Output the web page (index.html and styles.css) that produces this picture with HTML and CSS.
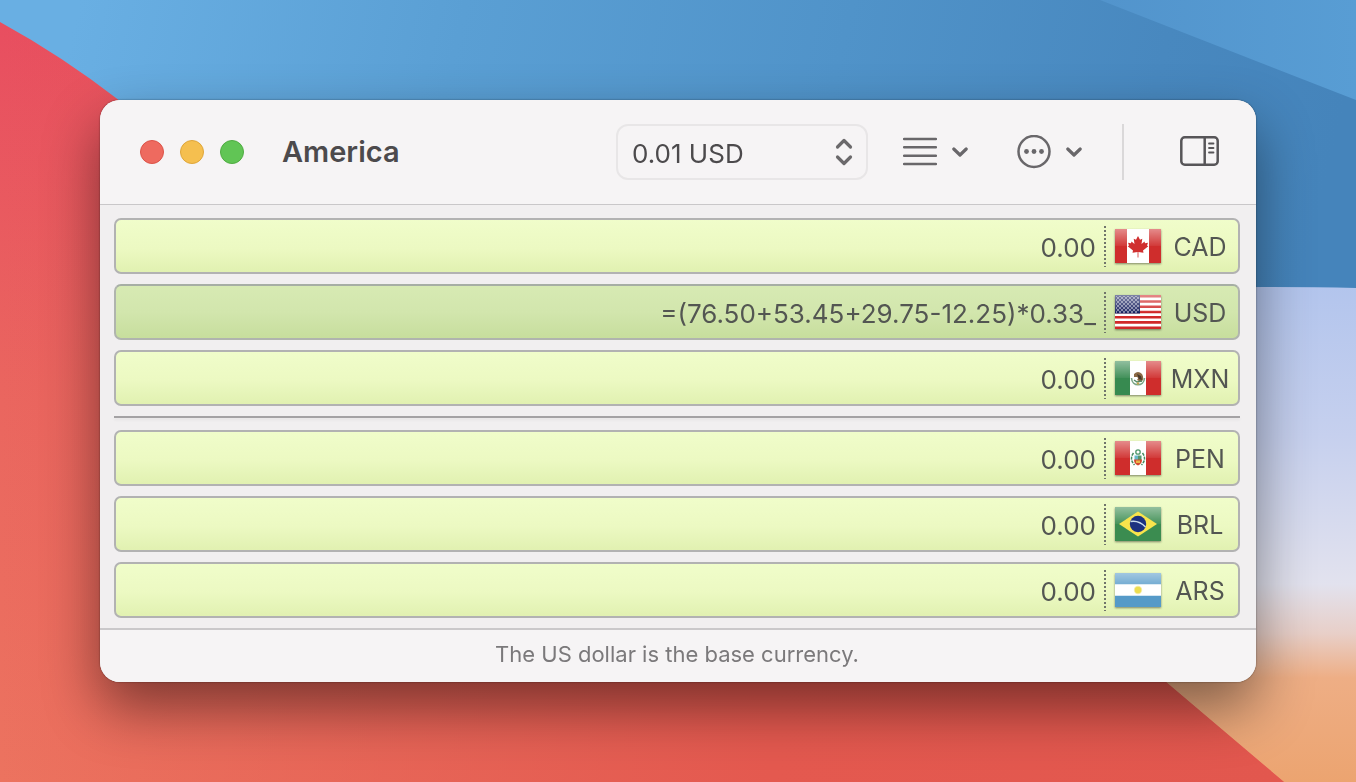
FILE: index.html
```html
<!DOCTYPE html>
<html lang="en">
<head>
<meta charset="utf-8">
<title>America</title>
<meta name="viewport" content="width=device-width, initial-scale=1">
<link rel="stylesheet" href="styles.css">
</head>
<body>
<svg class="wallpaper" viewBox="0 0 1356 782" preserveAspectRatio="none" aria-hidden="true">
  <defs>
    <linearGradient id="sky" gradientUnits="userSpaceOnUse" x1="80" y1="0" x2="1300" y2="290">
      <stop offset="0" stop-color="#69afe3"/><stop offset=".3" stop-color="#5a9fd4"/><stop offset=".6" stop-color="#5093c9"/><stop offset=".85" stop-color="#4888bf"/><stop offset="1" stop-color="#4584bb"/>
    </linearGradient>
    <linearGradient id="corner" x1="0" y1="0" x2="1" y2="0"><stop offset="0" stop-color="#5294cc"/><stop offset="1" stop-color="#589dd4"/></linearGradient>
    <linearGradient id="dune" x1="0" y1="0" x2="0" y2="1">
      <stop offset="0" stop-color="#b3c5ed"/><stop offset=".3" stop-color="#c6d0ee"/><stop offset=".6" stop-color="#e2e2ee"/><stop offset=".7" stop-color="#e8cfc8"/><stop offset=".79" stop-color="#eeae85"/><stop offset="1" stop-color="#eca470"/>
    </linearGradient>
    <linearGradient id="red" gradientUnits="userSpaceOnUse" x1="0" y1="22" x2="0" y2="782">
      <stop offset="0" stop-color="#e84e60"/><stop offset=".5" stop-color="#ea665f"/><stop offset="1" stop-color="#ec735f"/>
    </linearGradient>
    <linearGradient id="redRight" x1="0" y1="0" x2="1" y2="0">
      <stop offset="0" stop-color="#e0554e" stop-opacity="0"/><stop offset=".6" stop-color="#e4594f"/><stop offset="1" stop-color="#e2574e"/>
    </linearGradient>
  </defs>
  <rect width="1356" height="782" fill="url(#sky)"/>
  <path d="M1100 0L1356 100V0Z" fill="url(#corner)"/>
  <path d="M900 296Q1200 284 1356 288V782H900Z" fill="url(#dune)"/>
  <path d="M0 22Q62 56 120 101L720 390L1166 682L1284 782H0Z" fill="url(#red)"/>
  <path d="M0 22Q62 56 120 101L720 390L1166 682L1284 782H0Z" fill="url(#redRight)"/>
</svg>

<svg class="symbols" aria-hidden="true">
  <defs>
    <linearGradient id="gloss" x1="0" y1="0" x2="0" y2="1"><stop offset="0" stop-color="#fff" stop-opacity=".45"/><stop offset="1" stop-color="#fff" stop-opacity=".06"/></linearGradient>
    <pattern id="stars" width="4" height="4" patternUnits="userSpaceOnUse"><circle cx="1" cy="1" r=".8" fill="#fff"/><circle cx="3" cy="3" r=".8" fill="#fff"/></pattern>
    <symbol id="chevron" viewBox="0 0 16 10"><path d="M1.800 2L8 8L14.200 2" fill="none" stroke="currentColor" stroke-width="3.200" stroke-linecap="round" stroke-linejoin="round"/></symbol>
  </defs>
</svg>

<main class="window">
  <header class="toolbar">
    <div class="lights">
      <button class="light close" aria-label="Close"></button>
      <button class="light minimize" aria-label="Minimize"></button>
      <button class="light zoom" aria-label="Zoom"></button>
    </div>
    <h1 class="title">America</h1>
    <div class="picker">
      <select class="picker-select" aria-label="Precision"><option>0.01 USD</option></select>
      <svg class="picker-arrows" viewBox="0 0 18 28" aria-hidden="true"><path d="M2.500 9L9 2.500L15.500 9M2.500 19L9 25.500L15.500 19" fill="none" stroke="currentColor" stroke-width="3.200" stroke-linecap="round" stroke-linejoin="round"/></svg>
    </div>
    <button class="tool list-tool" aria-label="List options">
      <svg width="34" height="34" viewBox="0 0 34 34"><path d="M1 4H33M1 12.300H33M1 20.700H33M1 29H33" stroke="currentColor" stroke-width="2.400" stroke-linecap="round"/></svg>
      <svg width="16" height="10"><use href="#chevron"/></svg>
    </button>
    <button class="tool more-tool" aria-label="More options">
      <svg width="34" height="34" viewBox="0 0 34 34"><circle cx="17" cy="16.500" r="15.500" fill="none" stroke="currentColor" stroke-width="2.500"/><circle cx="9.500" cy="16.500" r="2.400" fill="currentColor"/><circle cx="17" cy="16.500" r="2.400" fill="currentColor"/><circle cx="24.500" cy="16.500" r="2.400" fill="currentColor"/></svg>
      <svg width="16" height="10"><use href="#chevron"/></svg>
    </button>
    <span class="divider"></span>
    <button class="tool side-tool" aria-label="Toggle sidebar">
      <svg width="39" height="32" viewBox="0 0 39 32"><rect x="1.300" y="1.300" width="36.400" height="27.400" rx="3.500" fill="none" stroke="currentColor" stroke-width="2.500"/><path d="M24.700 1.500V28.500" stroke="currentColor" stroke-width="2.500"/><path d="M29 7.500H33.500M29 12H33.500M29 16.500H33.500" stroke="currentColor" stroke-width="1.800" stroke-linecap="round"/></svg>
    </button>
  </header>

  <section class="rates">
    <div class="row">
      <input class="amount" id="cad" value="0.00">
      <span class="dots"></span>
      <svg class="flag" viewBox="0 0 46 34" aria-hidden="true"><path fill="#fff" d="M0 0H46V34H0Z"/><path fill="#cf2d2c" d="M0 0H12V34H0ZM34 0H46V34H34Z"/><path fill="#d02f2f" d="M23 7L25 10.800L27.300 9.800L26.500 15L29.500 12.500L30 14.200L33 13.800L32 16.500L33.300 17.300L28 21.500L28.500 23.700L23.400 23V28.500H22.600V23L17.500 23.700L18 21.500L12.700 17.300L14 16.500L13 13.800L16 14.200L16.500 12.500L19.500 15L18.700 9.800L21 10.800Z"/><path fill="url(#gloss)" d="M0 0H12V17H0ZM34 0H46V17H34Z"/></svg>
      <label class="code" for="cad">CAD</label>
    </div>
    <div class="row active">
      <input class="amount" id="usd" value="=(76.50+53.45+29.75-12.25)*0.33_">
      <span class="dots"></span>
      <svg class="flag" viewBox="0 0 46 34" aria-hidden="true"><path fill="#fff" d="M0 0H46V34H0Z"/><path d="M0 1.300H46M0 6.500H46M0 11.700H46M0 17H46M0 22.200H46M0 27.400H46M0 32.700H46" stroke="#d02828" stroke-width="2.600"/><path fill="#17205f" d="M0 0H25V18.500H0Z"/><path fill="url(#gloss)" d="M0 0H46V17H0Z"/><path fill="url(#stars)" d="M1 1H24V18H1Z"/></svg>
      <label class="code" for="usd">USD</label>
    </div>
    <div class="row">
      <input class="amount" id="mxn" value="0.00">
      <span class="dots"></span>
      <svg class="flag" viewBox="0 0 46 34" aria-hidden="true"><path fill="#fff" d="M0 0H46V34H0Z"/><path fill="#378a50" d="M0 0H15V34H0Z"/><path fill="#cf2d2c" d="M31 0H46V34H31Z"/><path fill="url(#gloss)" d="M0 0H46V17H0Z"/><path d="M16.500 17C17 26 29 26 29.500 17" fill="none" stroke="#78a585" stroke-width="1.600"/><path fill="#8a6945" d="M19 13Q23 9 27 13Q30 18 26 21L22 19Q24 17 22 16L19 16Z"/><path fill="#46392b" d="M22 13L26 15L27 19L24 18Z"/><path d="M19 19L22 21L27 20" stroke="#548c66" stroke-width="1.500" fill="none"/><circle cx="23" cy="22.500" r="1.200" fill="#c2a350"/></svg>
      <label class="code" for="mxn">MXN</label>
    </div>
    <hr class="separator">
    <div class="row">
      <input class="amount" id="pen" value="0.00">
      <span class="dots"></span>
      <svg class="flag" viewBox="0 0 46 34" aria-hidden="true"><path fill="#fff" d="M0 0H46V34H0Z"/><path fill="#cf2d2c" d="M0 0H15V34H0ZM31 0H46V34H31Z"/><path fill="url(#gloss)" d="M0 0H46V17H0Z"/><path d="M18.500 12Q14 18 19.500 24M27.500 12Q32 18 26.500 24" fill="none" stroke="#478c60" stroke-width="1.500" stroke-dasharray="3 1"/><circle cx="23" cy="11" r="2.200" fill="none" stroke="#4c976a" stroke-width="1.300"/><path fill="#66b8c8" d="M19.500 14.500H23V19H19.500Z"/><path fill="#55966d" d="M23 14.500H26.500V19H23Z"/><path fill="#d34b2f" d="M19 18.500H27Q27 23 23 24.500Q19 23 19 18.500Z"/><path fill="#e7b64a" d="M21 19.500H25V22H21Z"/></svg>
      <label class="code" for="pen">PEN</label>
    </div>
    <div class="row">
      <input class="amount" id="brl" value="0.00">
      <span class="dots"></span>
      <svg class="flag" viewBox="0 0 46 34" aria-hidden="true"><path fill="#3b8c50" d="M0 0H46V34H0Z"/><path fill="url(#gloss)" d="M0 0H46V17H0Z"/><path fill="#f9e44c" d="M4 17L23 4.500L42 17L23 29.500Z"/><circle cx="23" cy="17" r="8.200" fill="#1d3180"/><path d="M15.500 14.500Q24 13 30.500 20" fill="none" stroke="#c9dbec" stroke-width="1.500"/></svg>
      <label class="code" for="brl">BRL</label>
    </div>
    <div class="row">
      <input class="amount" id="ars" value="0.00">
      <span class="dots"></span>
      <svg class="flag" viewBox="0 0 46 34" aria-hidden="true"><path fill="#fff" d="M0 0H46V34H0Z"/><path fill="#559ac8" d="M0 0H46V11.300H0ZM0 22.700H46V34H0Z"/><path fill="url(#gloss)" d="M0 0H46V17H0Z"/><circle cx="23" cy="17" r="4.200" fill="#f5edac"/><circle cx="23" cy="17" r="3.200" fill="#eddd50"/></svg>
      <label class="code" for="ars">ARS</label>
    </div>
  </section>
  <footer class="status">The US dollar is the base currency.</footer>
</main>
</body>
</html>
```
FILE: styles.css
```css
* { box-sizing: border-box; }

body {
  margin: 0;
  min-height: 100vh;
  padding: 100px;
  font-family: Inter, "Liberation Sans", sans-serif;
  color: #4c4a4c;
}

button, input, select { font: inherit; color: inherit; }

.wallpaper {
  position: fixed;
  inset: 0;
  width: 100%;
  height: 100%;
  z-index: -1;
}

.symbols { position: absolute; width: 0; height: 0; }

.window {
  border-radius: 20px;
  overflow: hidden;
  background: #f1eff0;
  box-shadow: 0 0 2px rgba(0, 0, 0, .5), 0 26px 56px rgba(0, 0, 0, .46);
}

.toolbar {
  display: flex;
  align-items: center;
  height: 105px;
  padding: 0 37px 0 40px;
  background: #f6f4f5;
  border-bottom: 1px solid #c9c7c9;
}

.lights { display: flex; gap: 16px; }

.light {
  width: 24px;
  height: 24px;
  padding: 0;
  border: 1px solid;
  border-radius: 50%;
}

.close { background: #ee6a5f; border-color: #dc5348; }
.minimize { background: #f5bf4f; border-color: #dfa63a; }
.zoom { background: #61c555; border-color: #50ac42; }

.title {
  flex: 1;
  margin: 0 0 0 38px;
  font-size: 29px;
  font-weight: 600;
  line-height: 36px;
}

.picker { position: relative; width: 252px; }

.picker-select {
  width: 100%;
  height: 56px;
  padding: 2px 48px 0 14px;
  appearance: none;
  background: transparent;
  border: 2px solid #e8e6e7;
  border-radius: 12px;
  font-size: 26px;
}

.picker-arrows {
  position: absolute;
  top: 14px;
  right: 15px;
  width: 18px;
  height: 28px;
  color: #6b696b;
  pointer-events: none;
}

.tool {
  display: flex;
  align-items: center;
  gap: 15px;
  padding: 0;
  background: none;
  border: 0;
  color: #69676a;
}

.list-tool { margin-left: 35px; }
.more-tool { margin-left: 49px; }

.divider {
  width: 2px;
  height: 56px;
  margin: 0 56px 0 40px;
  background: #dad8d9;
}

.side-tool { color: #575558; }

.rates {
  display: flex;
  flex-direction: column;
  gap: 10px;
  padding: 13px 16px 10px 14px;
}

.row {
  display: flex;
  align-items: center;
  height: 56px;
  padding: 0 8px 0 12px;
  border: 2px solid #b2b2b2;
  border-radius: 7px;
  background: linear-gradient(#f0fdca, #ecf9c2 55%, #e1f1b1);
  color: #535652;
  font-size: 25px;
}

.active {
  background: linear-gradient(#d7eab3, #d2e6ad 50%, #c7de9d);
  border-color: #a6aea4 #b0b4ae #b0b4ae;
}

.amount {
  flex: 1;
  min-width: 0;
  height: 44px;
  padding: 2px 0 0;
  border: 0;
  background: none;
  outline: 0;
  text-align: right;
  font-size: 26px;
}

.dots {
  width: 2px;
  height: 42px;
  margin: 0 9px 0 8px;
  background: repeating-linear-gradient(transparent 0 1px, #70756b 1px 3px, transparent 3px 4px);
}

.flag {
  width: 46px;
  height: 34px;
  box-shadow: 0 1px 2px rgba(0, 0, 0, .45);
}

.code {
  width: 60px;
  margin-left: 9px;
  padding-top: 2px;
  text-align: center;
}

.separator {
  width: 100%;
  height: 2px;
  margin: 0 0 2px;
  border: 0;
  background: #a4a2a4;
  box-shadow: 0 2px 3px rgba(0, 0, 0, .06);
}

.status {
  padding: 10px 22px 14px 20px;
  border-top: 2px solid #cac8ca;
  background: #f6f4f5;
  color: #7b797b;
  font-size: 22px;
  line-height: 28px;
  text-align: center;
}
```
